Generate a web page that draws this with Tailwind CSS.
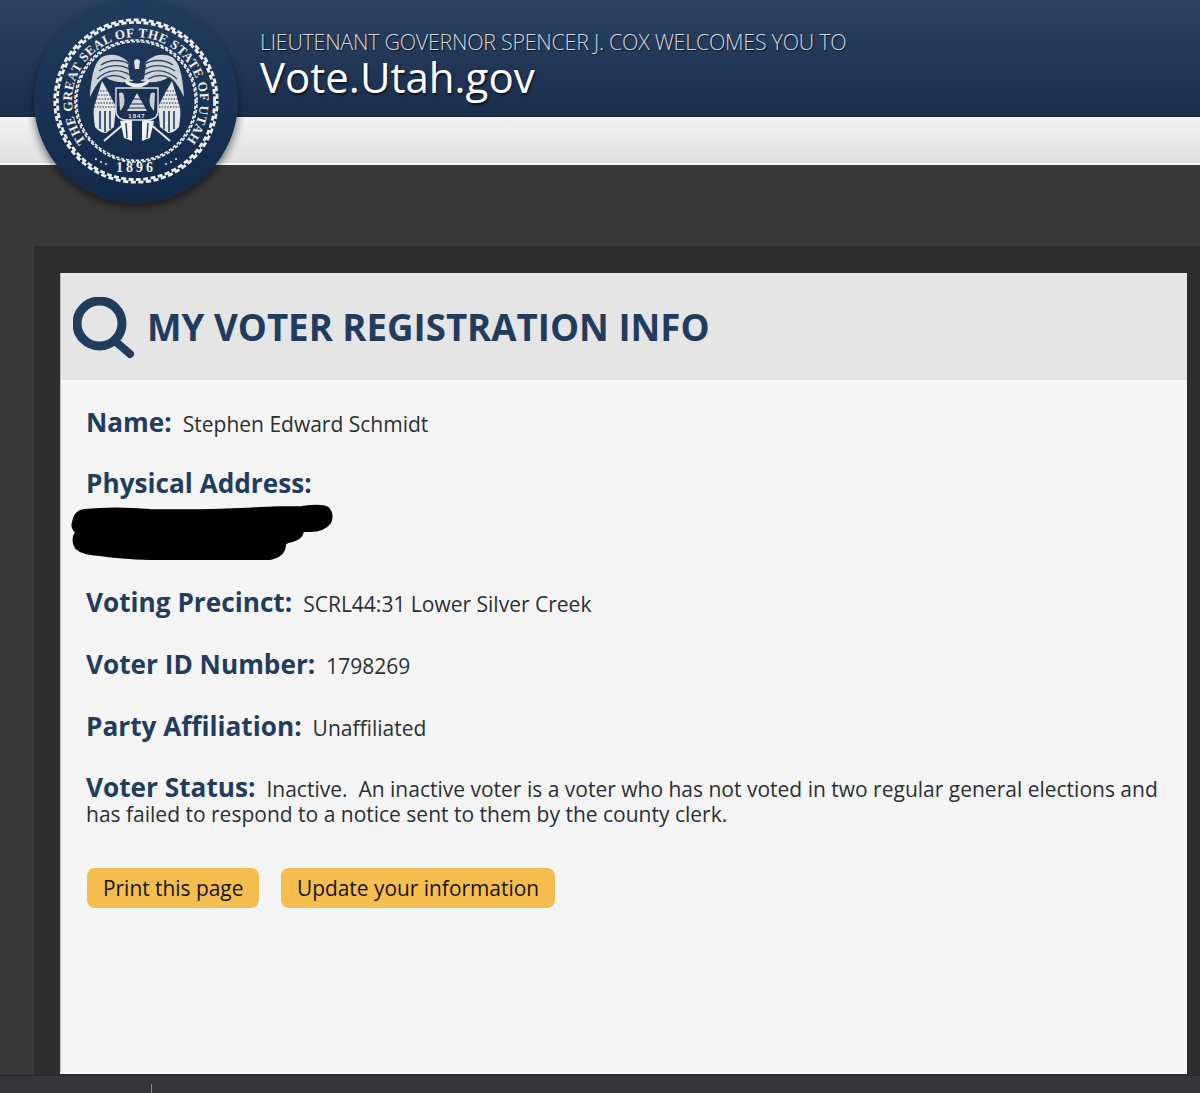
<!DOCTYPE html>
<html lang="en">
<head>
<meta charset="utf-8">
<title>Vote.Utah.gov</title>
<script src="https://cdn.jsdelivr.net/npm/@tailwindcss/browser@4"></script>
</head>
<body class="bg-[#393939] font-['Open_Sans',sans-serif] h-[1093px] overflow-hidden flex flex-col relative">

<header class="shrink-0">
  <div class="h-[117px] bg-linear-to-b from-[#2b4263] to-[#1b2f4c] pl-[260px] pt-[28px] border-b border-[#16263c]">
    <p class="text-[21.5px] leading-[28px] font-light tracking-[-0.3px] text-[#d5d9de] [text-shadow:1px_1px_1px_#0b1522]">LIEUTENANT GOVERNOR SPENCER J. COX WELCOMES YOU TO</p>
    <h1 class="text-[42px] leading-[42px] text-white [text-shadow:1px_2px_2px_#0b1522]">Vote.Utah.gov</h1>
  </div>
  <div class="h-[48px] bg-linear-to-b from-[#f1f2f2] to-[#e0e0e0] border-b-[2px] border-white"></div>
</header>

<div class="absolute left-[34px] top-[-1px] z-10 w-[204px] h-[204px] rounded-full bg-linear-to-b from-[#223c5e] to-[#12294a] shadow-[0_4px_9px_rgba(0,0,0,0.55)]">
  <svg width="204" height="204" viewBox="0 0 204 204" class="block">
    <defs>
      <path id="arc" d="M52 142 A64 64 0 1 1 152 142"/>
      <g id="half">
        <path d="M100 72 C94 58 80 52 68 58 C60 63 57 80 56 98 C61 88 65 81 71 78 C80 84 90 84 99 82Z" fill="#cfd3d7"/>
        <path d="M97 66 C88 60 76 60 67 66 M97 71 C87 65 75 65 65 72 M96 76 C86 70 74 70 63 80 M92 80 C85 76 78 75 70 79" stroke="#2b4466" stroke-width="1.3" fill="none"/>
        <path d="M68 82 L60 108 Q59 116 61 128 Q66 134 72 134 L80 128 L82 108 L76 96Z" fill="#e4e6e8"/>
        <path d="M62 100 H80 M61 104 H81 M60 108 H82 M66 92 H77 M64 96 H79" stroke="#20395a" stroke-width="1.2" stroke-dasharray="1.6 1.2"/>
        <path d="M66 112 V130 M71 112 V133 M76 112 V130" stroke="#20395a" stroke-width="1.6"/>
        <path d="M70 142 L98 118" stroke="#e8eaec" stroke-width="2"/>
        <path d="M86 122 L98 120 L98 142 L90 139Z" fill="#f0f1f2"/>
        <path d="M92 124 L93 139" stroke="#20395a" stroke-width="1.4"/>
      </g>
    </defs>
    <circle cx="102" cy="102" r="78.6" fill="none" stroke="#f1f2f3" stroke-width="2.8" stroke-dasharray="5 2.4"/>
    <circle cx="102" cy="102" r="81.2" fill="none" stroke="#f1f2f3" stroke-width="2.8" stroke-dasharray="5.16 2.48" stroke-dashoffset="2.4"/>
    <circle cx="102" cy="102" r="59.4" fill="none" stroke="#eceef0" stroke-width="1.7" stroke-dasharray="3.4 1.6"/>
    <circle cx="102" cy="102" r="61" fill="none" stroke="#eceef0" stroke-width="1.7" stroke-dasharray="3.5 1.64" stroke-dashoffset="1.6"/>
    <text font-family="'Liberation Serif',serif" font-weight="700" font-size="13" fill="#f1f2f3">
      <textPath href="#arc" textLength="286" lengthAdjust="spacing">THE GREAT SEAL OF THE STATE OF UTAH</textPath>
    </text>
    <text x="102" y="173" text-anchor="middle" font-family="'Liberation Serif',serif" font-weight="700" font-size="14" letter-spacing="3" fill="#f1f2f3">1896</text>
    <g fill="#e8eaec">
      <circle cx="62" cy="160" r="1"/><circle cx="67" cy="163" r="1"/><circle cx="72" cy="165" r="1"/>
      <circle cx="132" cy="165" r="1"/><circle cx="137" cy="163" r="1"/><circle cx="142" cy="160" r="1"/>
    </g>
    <use href="#half"/>
    <use href="#half" transform="matrix(-1 0 0 1 206 0)"/>
    <path d="M94 66 Q103 60 112 66 L110 80 Q103 84 96 80Z" fill="#20395a"/>
    <path d="M100 62 Q103 58 106 62 L105 70 L101 70Z" fill="#e4e6e8"/>
    <path d="M90 80 Q103 89 116 80 L114 85 Q103 92 92 85Z" fill="#eceef0"/>
    <path d="M82 89 H124 V112 Q124 120 114 121 H92 Q82 120 82 112Z" fill="#1a3152" stroke="#dfe2e5" stroke-width="1.4"/>
    <path d="M103 94 L113 112 H93Z" fill="#d4d8dc"/>
    <path d="M99 100 H107 M96 105 H110 M94 109 H112" stroke="#1a3152" stroke-width="1"/>
    <path d="M85 94 Q90 92 90 98 Q92 106 86 112Z M121 94 Q116 92 116 98 Q114 106 120 112Z" fill="#c9cdd2"/>
    <text x="103" y="119" text-anchor="middle" font-family="'Liberation Sans',sans-serif" font-weight="700" font-size="6" letter-spacing="1" fill="#e8eaec">1847</text>
  </svg>
</div>

<main class="flex-1 min-h-0 ml-[34px] mt-[81px] bg-[#2e2e2e] pl-[26px] pr-[13px] pt-[27px]">
  <section class="h-[801px] bg-[#f5f5f5] border-l border-[#bdbdbd] border-b-[2px] border-b-white">
    <div class="h-[107px] bg-[#e5e5e5] flex items-center pl-[12px]">
      <svg width="62" height="62" viewBox="0 0 62 62" class="shrink-0 mt-[2px]">
        <circle cx="26.5" cy="26.5" r="22.5" fill="none" stroke="#223c5e" stroke-width="9"/>
        <path d="M42 44 L57 57" stroke="#223c5e" stroke-width="8" stroke-linecap="round"/>
      </svg>
      <h2 class="ml-[12px] mt-[2px] text-[36.65px] leading-none font-bold text-[#223c5e] whitespace-nowrap">MY VOTER REGISTRATION INFO</h2>
    </div>

    <div class="pl-[25px] pr-[28px] pt-[30px] text-[21px] leading-[25px] text-[#2b2f33]">
      <p class="h-[36px]"><b class="text-[26.2px] text-[#223c5e] font-bold mr-[11px]">Name:</b>Stephen Edward Schmidt</p>
      <p class="mt-[25px] h-[25px]"><b class="text-[26.2px] text-[#223c5e] font-bold">Physical Address:</b></p>
      <svg width="270" height="58" viewBox="0 0 270 58" class="block ml-[-16px] mt-[8px]">
        <path d="M3 18 Q5 7 14 6 Q45 3 80 6 Q130 7 170 5 Q205 3 232 3 Q252 0 258 4 Q264 10 260 19 Q254 27 240 27 L233 27 Q232 36 218 38 L215 40 Q215 52 200 55 L80 55 Q50 54 30 51 Q12 50 6 44 Q1 36 6 28 Q1 23 3 18Z" fill="#000" stroke="#000" stroke-width="2" stroke-linejoin="round"/>
      </svg>
      <p class="mt-[28px] h-[36px]"><b class="text-[26.2px] text-[#223c5e] font-bold mr-[11px]">Voting Precinct:</b>SCRL44:31 Lower Silver Creek</p>
      <p class="mt-[26px] h-[36px]"><b class="text-[26.2px] text-[#223c5e] font-bold mr-[11px]">Voter ID Number:</b>1798269</p>
      <p class="mt-[26px] h-[36px]"><b class="text-[26.2px] text-[#223c5e] font-bold mr-[11px]">Party Affiliation:</b>Unaffiliated</p>
      <p class="mt-[25px]"><b class="text-[26.2px] text-[#223c5e] font-bold mr-[11px]">Voter Status:</b>Inactive.&nbsp; An inactive voter is a voter who has not voted in two regular general elections and has failed to respond to a notice sent to them by the county clerk.</p>
      <div class="flex gap-[22px] mt-[41px] ml-[1px]">
        <button class="h-[40px] px-[16px] rounded-[8px] bg-[#f5be4f] text-[20.9px] text-[#17130a]">Print this page</button>
        <button class="h-[40px] px-[15.5px] rounded-[8px] bg-[#f5be4f] text-[20.9px] text-[#17130a]">Update your information</button>
      </div>
    </div>
  </section>
</main>

<footer class="shrink-0 h-[18px] bg-[#35353a] border-t border-[#2a2a2d] pl-[151px] pt-[8px]">
  <div class="w-px h-[10px] bg-[#8a8a90]"></div>
</footer>
</body>
</html>
